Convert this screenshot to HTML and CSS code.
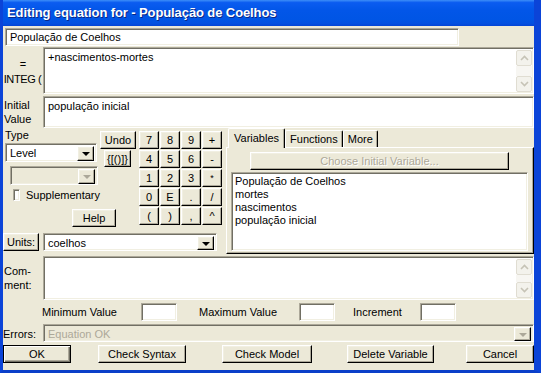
FILE: index.html
```html
<!DOCTYPE html>
<html lang="pt">
<head>
    <meta charset="UTF-8">
    <title>Editing equation</title>
    <link rel="stylesheet" href="styles.css">
</head>
<body>

<div class="window">
    <div class="titlebar">Editing equation for - População de Coelhos</div>

    <div class="client">

        <div class="name-row">
            <div class="sunken name-field">População de Coelhos</div>
        </div>

        <div class="eq-row">
            <div class="side-label eq-label"><span>=</span><span class="integ">INTEG (</span></div>
            <div class="sunken area">
                <div class="area-text">+nascimentos-mortes</div>
                <div class="vscroll">
                    <div class="sbtn"><svg width="9" height="6" viewBox="0 0 9 6"><path d="M1 5 L4.5 1.5 L8 5" fill="none" stroke="#c6c3b6" stroke-width="1.6"/></svg></div>
                    <div class="strack"></div>
                    <div class="sbtn"><svg width="9" height="6" viewBox="0 0 9 6"><path d="M1 1 L4.5 4.5 L8 1" fill="none" stroke="#c6c3b6" stroke-width="1.6"/></svg></div>
                </div>
            </div>
        </div>

        <div class="init-row">
            <div class="side-label init-label">Initial<br>Value</div>
            <div class="sunken area">
                <div class="area-text">população inicial</div>
            </div>
        </div>

        <div class="middle">
            <div class="left-part">
                <div class="upper">
                    <div class="type-col">
                        <div class="type-label">Type</div>
                        <div class="sunken combo level-combo">
                            <span class="combo-text">Level</span>
                            <span class="btn drop"><span class="tri"></span></span>
                        </div>
                        <div class="sunken combo off-combo">
                            <span class="combo-text"></span>
                            <span class="btn drop"><span class="tri tri-off"></span></span>
                        </div>
                        <div class="check-row">
                            <span class="sunken check"></span>
                            <span>Supplementary</span>
                        </div>
                    </div>

                    <div class="tools">
                        <div class="btn undo-btn">Undo</div>
                        <div class="btn brace-btn">{[()]}</div>
                    </div>

                    <div class="keypad">
                        <div class="btn key">7</div>
                        <div class="btn key">8</div>
                        <div class="btn key">9</div>
                        <div class="btn key">+</div>
                        <div class="btn key">4</div>
                        <div class="btn key">5</div>
                        <div class="btn key">6</div>
                        <div class="btn key">-</div>
                        <div class="btn key">1</div>
                        <div class="btn key">2</div>
                        <div class="btn key">3</div>
                        <div class="btn key small">*</div>
                        <div class="btn key">0</div>
                        <div class="btn key">E</div>
                        <div class="btn key">.</div>
                        <div class="btn key">/</div>
                        <div class="btn key">(</div>
                        <div class="btn key">)</div>
                        <div class="btn key">,</div>
                        <div class="btn key">^</div>
                    </div>

                    <div class="btn help-btn">Help</div>
                </div>

                <div class="units-row">
                    <div class="btn units-btn">Units:</div>
                    <div class="sunken combo units-combo">
                        <span class="combo-text">coelhos</span>
                        <span class="btn drop"><span class="tri"></span></span>
                    </div>
                </div>
            </div>

            <div class="tabctl">
                <div class="tabstrip">
                    <div class="tab active">Variables</div>
                    <div class="tab">Functions</div>
                    <div class="tab">More</div>
                </div>
                <div class="tabpage">
                    <div class="btn choose-btn">Choose Initial Variable...</div>
                    <div class="sunken varlist">
                        <div>População de Coelhos</div>
                        <div>mortes</div>
                        <div>nascimentos</div>
                        <div>população inicial</div>
                    </div>
                </div>
            </div>
        </div>

        <div class="comment-row">
            <div class="side-label comment-label">Com-<br>ment:</div>
            <div class="sunken area">
                <div class="area-text"></div>
                <div class="vscroll">
                    <div class="sbtn"><svg width="9" height="6" viewBox="0 0 9 6"><path d="M1 5 L4.5 1.5 L8 5" fill="none" stroke="#c6c3b6" stroke-width="1.6"/></svg></div>
                    <div class="strack"></div>
                    <div class="sbtn"><svg width="9" height="6" viewBox="0 0 9 6"><path d="M1 1 L4.5 4.5 L8 1" fill="none" stroke="#c6c3b6" stroke-width="1.6"/></svg></div>
                </div>
            </div>
        </div>

        <div class="range-row">
            <span class="range-label min-label">Minimum Value</span>
            <span class="sunken range-box"></span>
            <span class="range-label max-label">Maximum Value</span>
            <span class="sunken range-box"></span>
            <span class="range-label inc-label">Increment</span>
            <span class="sunken range-box"></span>
        </div>

        <div class="errors-row">
            <div class="side-label errors-label">Errors:</div>
            <div class="sunken combo errors-combo">
                <span class="combo-text">Equation OK</span>
                <span class="btn drop"><span class="tri tri-off"></span></span>
            </div>
        </div>

        <div class="button-row">
            <div class="btn default-btn ok-btn">OK</div>
            <div class="btn syntax-btn">Check Syntax</div>
            <div class="btn model-btn">Check Model</div>
            <div class="btn delete-btn">Delete Variable</div>
            <div class="btn cancel-btn">Cancel</div>
        </div>

    </div>
</div>

</body>
</html>
```

FILE: styles.css
```css
* {
    box-sizing: border-box;
}
body {
    margin: 0;
    background: #fff;
    font-family: "Liberation Sans", Arial, sans-serif;
    font-size: 11px;
    color: #000;
}
.window {
    width: 541px;
    height: 373px;
    background: #0055ea;
    border-left: 3px solid #0b44d8;
    border-right: 7px solid #0b44d8;
    border-bottom: 3px solid #0a3fc9;
    overflow: hidden;
}
.titlebar {
    height: 26px;
    margin-left: -3px;
    margin-right: -7px;
    padding: 5px 0 0 7px;
    background: linear-gradient(#3d8ef8 0%, #0b5cf0 10%, #0256e8 40%, #0055e5 75%, #0450e0 90%, #0445d6 100%);
    color: #fff;
    font-weight: bold;
    font-size: 13px;
    letter-spacing: -0.1px;
    text-shadow: 1px 1px #0a2785;
    white-space: nowrap;
}
.client {
    width: 531px;
    height: 344px;
    background: #ece9d8;
    display: flex;
    flex-direction: column;
}

/* bevels */
.sunken {
    background: #fff;
    border: 1px solid;
    border-color: #aca899 #fff #fff #aca899;
    box-shadow: inset 1px 1px #716f64, inset -1px -1px #f1efe2;
}
.btn {
    background: #ece9d8;
    border: 1px solid;
    border-color: #fff #000 #000 #fff;
    box-shadow: inset -1px -1px #aca899, inset 1px 1px #f1efe2;
    display: flex;
    align-items: center;
    justify-content: center;
    white-space: nowrap;
}

/* top rows */
.name-row {
    margin-top: 2px;
    height: 18px;
    display: flex;
}
.name-field {
    margin-left: 2px;
    width: 454px;
    padding: 2px 0 0 4px;
}
.eq-row, .init-row, .comment-row {
    display: flex;
}
.eq-row {
    margin-top: 1px;
    height: 47px;
}
.init-row {
    margin-top: 2px;
    height: 32px;
}
.side-label {
    width: 40px;
    flex: none;
    display: flex;
    flex-direction: column;
    justify-content: center;
    white-space: nowrap;
}
.eq-label {
    align-items: center;
    line-height: 15px;
    padding-top: 2px;
}
.integ {
    letter-spacing: -0.4px;
    margin-left: -1px;
}
.init-label, .comment-label {
    padding-left: 1px;
    line-height: 14px;
}
.area {
    flex: 1;
    display: flex;
}
.area-text {
    flex: 1;
    padding: 3px 0 0 4px;
}
.vscroll {
    width: 16px;
    margin: 2px 1px 1px 0;
    display: flex;
    flex-direction: column;
}
.sbtn {
    height: 16px;
    border: 1px solid #e0ddd2;
    border-radius: 2px;
    background: #f3f2ec;
    display: flex;
    align-items: center;
    justify-content: center;
}
.strack {
    flex: 1;
    background: #f7f6f2;
}

/* middle block */
.middle {
    height: 127px;
    display: flex;
}
.left-part {
    width: 221px;
    flex: none;
}
.upper {
    height: 100px;
    display: grid;
    grid-template-columns: 97px 39px 85px;
    grid-template-rows: 76px 24px;
}
.type-col {
    grid-column: 1;
    grid-row: 1;
    padding-left: 2px;
}
.type-label {
    height: 15px;
    padding-top: 1px;
}
.combo {
    display: flex;
    height: 19px;
    padding: 2px;
}
.combo-text {
    flex: 1;
    padding: 1px 0 0 2px;
}
.drop {
    width: 17px;
    height: 15px;
}
.tri {
    width: 0;
    height: 0;
    border-left: 4px solid transparent;
    border-right: 4px solid transparent;
    border-top: 4px solid #000;
    margin-top: 1px;
}
.tri-off {
    border-top-color: #aca899;
}
.level-combo {
    width: 92px;
}
.off-combo {
    width: 88px;
    height: 19px;
    margin: 4px 0 0 5px;
    background: #ece9d8;
}
.check-row {
    display: flex;
    align-items: center;
    gap: 6px;
    margin: 4px 0 0 8px;
}
.check {
    width: 12px;
    height: 12px;
}
.tools {
    grid-column: 2;
    grid-row: 1;
    padding-top: 3px;
}
.undo-btn {
    width: 36px;
    height: 18px;
}
.brace-btn {
    width: 27px;
    height: 17px;
    margin: 1px 0 0 4px;
}
.keypad {
    grid-column: 3;
    grid-row: 1 / span 2;
    padding-top: 3px;
    display: grid;
    grid-template-columns: repeat(4, 20px);
    grid-auto-rows: 18px;
    gap: 1px 1px;
}
.key.small {
    font-size: 9px;
}
.help-btn {
    grid-column: 1 / span 2;
    grid-row: 2;
    width: 44px;
    height: 18px;
    margin: 5px 0 0 69px;
}
.units-row {
    display: flex;
    margin-top: 5px;
    height: 18px;
}
.units-btn {
    width: 36px;
}
.units-combo {
    width: 174px;
    height: 18px;
    margin-left: 4px;
}
.units-combo .drop {
    height: 14px;
}

/* tabs */
.tabctl {
    width: 308px;
    margin-left: 2px;
}
.tabstrip {
    height: 19px;
    display: flex;
    align-items: flex-end;
    padding-left: 2px;
    position: relative;
    z-index: 1;
}
.tab {
    height: 17px;
    padding: 0 4px;
    border: 1px solid;
    border-bottom: none;
    border-color: #fff #000 #fff #fff;
    box-shadow: inset -1px 0 #aca899;
    border-radius: 2px 2px 0 0;
    background: #ece9d8;
    display: flex;
    align-items: center;
}
.tab.active {
    height: 20px;
    margin-bottom: -1px;
    padding: 0 5px 2px 5px;
}
.tabpage {
    height: 107px;
    border: 1px solid;
    border-color: #fff #000 #000 #fff;
    box-shadow: inset -1px -1px #aca899;
    padding: 4px 0 0 4px;
}
.choose-btn {
    width: 259px;
    height: 18px;
    margin-left: 19px;
    color: #aca899;
    text-shadow: 1px 1px #fff;
}
.varlist {
    width: 297px;
    height: 79px;
    margin-top: 2px;
    padding: 2px 0 0 3px;
    line-height: 13px;
}

/* bottom rows */
.comment-row {
    margin-top: 1px;
    height: 44px;
}
.range-row {
    margin-top: 3px;
    height: 18px;
    display: flex;
    align-items: center;
}
.range-label {
    flex: none;
}
.min-label {
    padding-left: 39px;
    width: 138px;
}
.max-label {
    width: 122px;
    padding-left: 22px;
}
.inc-label {
    width: 85px;
    padding-left: 18px;
}
.range-box {
    width: 36px;
    height: 18px;
}
.errors-row {
    margin-top: 3px;
    height: 18px;
    display: flex;
}
.errors-label {
    padding-top: 1px;
}
.errors-combo {
    flex: 1;
    height: 18px;
    background: #ece9d8;
    color: #aca899;
}
.errors-combo .drop {
    height: 14px;
}
.button-row {
    margin-top: 3px;
    height: 18px;
    display: flex;
}
.button-row .btn {
    height: 18px;
}
.default-btn {
    border-color: #000;
    box-shadow: inset 1px 1px #fff, inset -1px -1px #716f64, inset -2px -2px #aca899;
}
.ok-btn {
    width: 68px;
}
.syntax-btn {
    width: 88px;
    margin-left: 27px;
}
.model-btn {
    width: 90px;
    margin-left: 36px;
}
.delete-btn {
    width: 87px;
    margin-left: 35px;
}
.cancel-btn {
    width: 68px;
    margin-left: 32px;
}
```
